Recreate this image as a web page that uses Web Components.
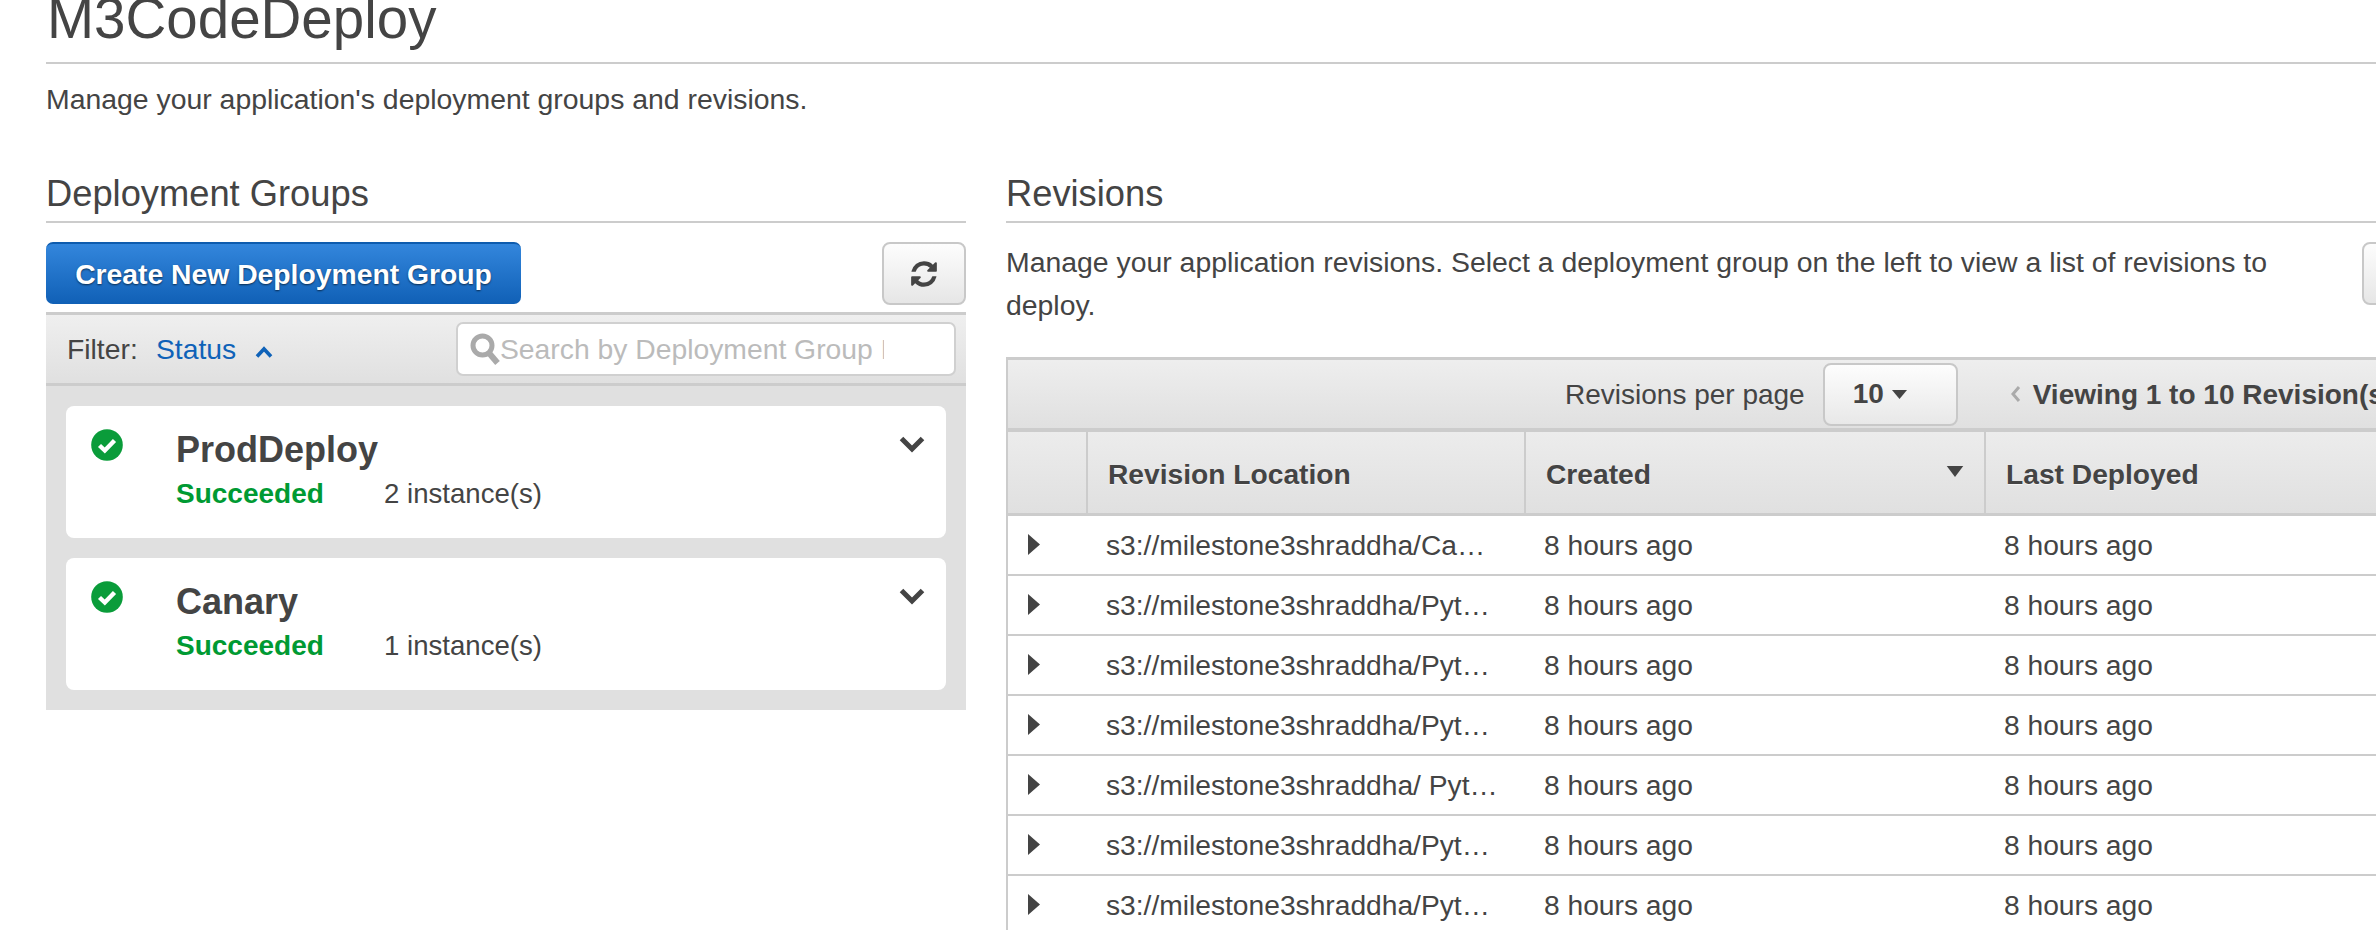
<!DOCTYPE html>
<html>
<head>
<meta charset="utf-8">
<title>M3CodeDeploy</title>
<style>
    html, body { margin: 0; background: #fff; overflow: hidden; }
    body { width: 2376px; height: 930px; font-family: "Liberation Sans", Arial, sans-serif; color: #444; }
    .columns { display: grid; grid-template-columns: 966px 1370px; column-gap: 40px; margin-top: 57px; }
</style>
</head>
<body>
<page-header>
    <span slot="title">M3CodeDeploy</span>
    Manage your application's deployment groups and revisions.
</page-header>

<div class="columns">
    <deployment-groups>
        <group-card name="ProdDeploy" count="2 instance(s)"></group-card>
        <group-card name="Canary" count="1 instance(s)"></group-card>
    </deployment-groups>
    <revisions-panel></revisions-panel>
</div>

<script>
const REFRESH_PATH = 'M1639 1056q0 5-1 7-64 268-268 434.5t-478 166.5q-146 0-282.5-55t-243.5-157l-129 129q-19 19-45 19t-45-19-19-45v-448q0-26 19-45t45-19h448q26 0 45 19t19 45-19 45l-137 137q71 66 161 102t187 36q134 0 250-65t186-179q11-17 53-117 8-23 30-23h192q13 0 22.5 9.5t9.5 22.5zm25-800v448q0 26-19 45t-45 19h-448q-26 0-45-19t-19-45 19-45l138-138q-148-137-349-137-134 0-250 65t-186 179q-11 17-53 117-8 23-30 23h-199q-13 0-22.5-9.5t-9.5-22.5v-7q65-268 270-434.5t480-166.5q146 0 284 55.5t245 156.5l130-129q19-19 45-19t45 19 19 45z';

class PageHeader extends HTMLElement {
    connectedCallback() {
        this.attachShadow({ mode: 'open' });
        this.shadowRoot.innerHTML = `
            <style>
                :host { display: block; padding-left: 46px; }
                h1 {
                    margin: 0;
                    padding: 0 0 25px 1px;
                    font-size: 56.5px;
                    line-height: 37px;
                    font-weight: 400;
                    border-bottom: 2px solid #ccc;
                }
                p { margin: 18px 0 0 0; font-size: 28.4px; line-height: 34px; }
            </style>
            <h1><slot name="title"></slot></h1>
            <p><slot></slot></p>
        `;
    }
}

class SectionHead extends HTMLElement {
    connectedCallback() {
        this.attachShadow({ mode: 'open' });
        this.shadowRoot.innerHTML = `
            <style>
                :host {
                    display: block;
                    padding: 0 0 7px 0;
                    font-size: 36.3px;
                    line-height: 41px;
                    border-bottom: 2px solid #ccc;
                }
            </style>
            <slot></slot>
        `;
    }
}

class RefreshButton extends HTMLElement {
    connectedCallback() {
        this.attachShadow({ mode: 'open' });
        this.shadowRoot.innerHTML = `
            <style>
                :host {
                    display: flex;
                    flex: none;
                    align-items: center;
                    justify-content: center;
                    box-sizing: border-box;
                    width: 84px;
                    height: 63px;
                    border: 2px solid #c8c8c8;
                    border-radius: 8px;
                    background: linear-gradient(#fdfdfd, #e6e6e6);
                }
                svg { width: 30px; height: 30px; fill: #444; }
            </style>
            <svg viewBox="0 0 1792 1792"><path d="${REFRESH_PATH}"/></svg>
        `;
    }
}

class GroupCard extends HTMLElement {
    connectedCallback() {
        this.attachShadow({ mode: 'open' });
        this.shadowRoot.innerHTML = `
            <style>
                :host {
                    display: grid;
                    grid-template-columns: 110px 1fr 47px;
                    box-sizing: border-box;
                    height: 132px;
                    background: #fff;
                    border-radius: 8px;
                }
                .status { padding: 23px 0 0 25px; }
                .status svg { display: block; width: 32px; height: 32px; }
                .info { padding-top: 23px; }
                .name { font-size: 36px; line-height: 42px; font-weight: 700; }
                .meta { display: flex; font-size: 27.6px; line-height: 34px; margin-top: 6px; }
                .ok { width: 208px; color: #009a33; font-size: 28px; font-weight: 700; }
                .more svg { display: block; width: 26px; height: 18px; margin-top: 29px; }
            </style>
            <div class="status">
                <svg viewBox="0 0 32 32">
                    <circle cx="16" cy="16" r="15.8" fill="#0a9c3a"/>
                    <polyline points="8.5,16.5 13.8,21.5 23.5,11.5" fill="none" stroke="#fff" stroke-width="4.4"/>
                </svg>
            </div>
            <div class="info">
                <div class="name">${this.getAttribute('name')}</div>
                <div class="meta"><span class="ok">Succeeded</span><span>${this.getAttribute('count')}</span></div>
            </div>
            <div class="more">
                <svg viewBox="0 0 26 18"><polyline points="2.5,3.5 13,14 23.5,3.5" fill="none" stroke="#444" stroke-width="5"/></svg>
            </div>
        `;
    }
}

class DeploymentGroups extends HTMLElement {
    connectedCallback() {
        this.attachShadow({ mode: 'open' });
        this.shadowRoot.innerHTML = `
            <style>
                :host { display: block; margin-left: 46px; }
                .actions { display: flex; justify-content: space-between; margin-top: 19px; }
                .create {
                    box-sizing: border-box;
                    width: 475px;
                    height: 62px;
                    display: flex;
                    align-items: center;
                    justify-content: center;
                    border-radius: 7px;
                    border-top: 2px solid #0e5cae;
                    background: linear-gradient(#3386dc, #1060b6);
                    color: #fff;
                    font-size: 28.3px;
                    font-weight: 700;
                    text-shadow: 0 1px 2px rgba(0, 0, 0, 0.6);
                }
                .filter {
                    box-sizing: border-box;
                    height: 74px;
                    margin-top: 7px;
                    display: flex;
                    align-items: center;
                    padding: 0 10px 0 21px;
                    border-top: 3px solid #ccc;
                    border-bottom: 3px solid #ccc;
                    background: linear-gradient(#efefef, #e0e0e0);
                    font-size: 28.3px;
                }
                .label { width: 89px; }
                .status { color: #0f62b8; }
                .up { width: 18px; height: 12px; margin: 6px 0 0 19px; }
                .search {
                    box-sizing: border-box;
                    display: flex;
                    align-items: center;
                    width: 500px;
                    height: 54px;
                    margin-left: auto;
                    padding-left: 12px;
                    border: 2px solid #d0d0d0;
                    border-radius: 7px;
                    background: #fff;
                    color: #bbb;
                    white-space: nowrap;
                    overflow: hidden;
                }
                .search svg { flex: none; width: 30px; height: 33px; }
                .search div { flex: none; width: 384px; overflow: hidden; }
                .list {
                    display: flex;
                    flex-direction: column;
                    gap: 20px;
                    padding: 20px;
                    background: #e0e0e0;
                }
            </style>
            <section-head>Deployment Groups</section-head>
            <div class="actions">
                <div class="create">Create New Deployment Group</div>
                <refresh-button></refresh-button>
            </div>
            <div class="filter">
                <span class="label">Filter:</span>
                <span class="status">Status</span>
                <svg class="up" viewBox="0 0 18 12"><polyline points="2,10.5 9,3 16,10.5" fill="none" stroke="#0f62b8" stroke-width="3.6"/></svg>
                <div class="search">
                    <svg viewBox="0 0 30 33">
                        <circle cx="12.5" cy="12.5" r="9.5" fill="none" stroke="#aaa" stroke-width="5"/>
                        <line x1="19" y1="20" x2="27.5" y2="30" stroke="#aaa" stroke-width="6"/>
                    </svg>
                    <div>Search by Deployment Group Name</div>
                </div>
            </div>
            <div class="list"><slot></slot></div>
        `;
    }
}

class RevisionRow extends HTMLElement {
    connectedCallback() {
        this.attachShadow({ mode: 'open' });
        this.shadowRoot.innerHTML = `
            <style>
                :host {
                    display: grid;
                    grid-template-columns: var(--cols);
                    box-sizing: border-box;
                    height: 60px;
                    align-items: center;
                    border-bottom: 2px solid #ccc;
                    font-size: 28.2px;
                    font-kerning: none;
                    white-space: pre;
                }
                svg { width: 12px; height: 21px; margin: 0 0 2px 20px; fill: #444; display: block; }
                span { padding-left: 20px; }
            </style>
            <svg viewBox="0 0 12 21"><polygon points="0,0 12,10.5 0,21"/></svg>
            <span>${this.getAttribute('loc')}</span>
            <span>8 hours ago</span>
            <span>8 hours ago</span>
        `;
    }
}

class RevisionsPanel extends HTMLElement {
    connectedCallback() {
        this.attachShadow({ mode: 'open' });
        const rows = ['Ca…', 'Pyt…', 'Pyt…', 'Pyt…', ' Pyt…', 'Pyt…', 'Pyt…']
            .map(s => `<revision-row loc="s3://milestone3shraddha/${s}"></revision-row>`).join('');
        this.shadowRoot.innerHTML = `
            <style>
                :host { display: block; overflow: hidden; --cols: 78px 438px 460px 1fr; }
                .intro { display: flex; justify-content: space-between; margin-top: 18px; height: 116px; }
                .intro p { margin: 0; width: 1290px; font-size: 28.4px; line-height: 43px; }
                .intro refresh-button { margin: 1px -70px 0 0; }
                .table { border-left: 2px solid #ccc; }
                .pager {
                    box-sizing: border-box;
                    height: 75px;
                    display: flex;
                    align-items: center;
                    border-top: 3px solid #ccc;
                    border-bottom: 4px solid #ccc;
                    background: linear-gradient(#eee, #e0e0e0);
                    font-size: 28px;
                    white-space: nowrap;
                }
                .pager span { padding-top: 2px; }
                .per { margin-left: 557px; }
                .size {
                    box-sizing: border-box;
                    flex: none;
                    display: flex;
                    align-items: center;
                    width: 135px;
                    height: 63px;
                    margin-left: 18px;
                    padding-left: 28px;
                    border: 2px solid #c8c8c8;
                    border-radius: 8px;
                    background: linear-gradient(#fdfdfd, #e8e8e8);
                    font-weight: 700;
                }
                .size svg { width: 15px; height: 9px; margin-left: 8px; fill: #444; }
                .prev { width: 10px; height: 20px; margin-left: 53px; flex: none; }
                .view { margin-left: 12px; font-weight: 700; }
                .head {
                    display: grid;
                    grid-template-columns: var(--cols);
                    box-sizing: border-box;
                    height: 84px;
                    border-bottom: 3px solid #ccc;
                    background: linear-gradient(#ececec, #e0e0e0);
                    font-size: 28.2px;
                    font-weight: 700;
                }
                .head div {
                    display: flex;
                    align-items: center;
                    justify-content: space-between;
                    padding: 4px 20px 0;
                    border-left: 2px solid #ccc;
                    text-shadow: 0 1px 0 rgba(255, 255, 255, 0.6);
                }
                .head div:first-child { border-left: none; }
                .head svg { width: 18px; height: 11px; fill: #444; margin-bottom: 6px; }
            </style>
            <section-head>Revisions</section-head>
            <div class="intro">
                <p>Manage your application revisions. Select a deployment group on the left to view a list of revisions to deploy.</p>
                <refresh-button></refresh-button>
            </div>
            <div class="table">
                <div class="pager">
                    <span class="per">Revisions per page</span>
                    <div class="size">10<svg viewBox="0 0 15 9"><polygon points="0,0 15,0 7.5,9"/></svg></div>
                    <svg class="prev" viewBox="0 0 10 20"><polyline points="8,3 2,10 8,17" fill="none" stroke="#aaa" stroke-width="3"/></svg>
                    <span class="view">Viewing 1 to 10 Revision(s)</span>
                </div>
                <div class="head">
                    <div></div>
                    <div>Revision Location</div>
                    <div>Created<svg viewBox="0 0 15 10"><polygon points="0,0 15,0 7.5,10"/></svg></div>
                    <div>Last Deployed</div>
                </div>
                ${rows}
            </div>
        `;
    }
}

customElements.define('page-header', PageHeader);
customElements.define('section-head', SectionHead);
customElements.define('refresh-button', RefreshButton);
customElements.define('group-card', GroupCard);
customElements.define('deployment-groups', DeploymentGroups);
customElements.define('revision-row', RevisionRow);
customElements.define('revisions-panel', RevisionsPanel);
</script>
</body>
</html>
